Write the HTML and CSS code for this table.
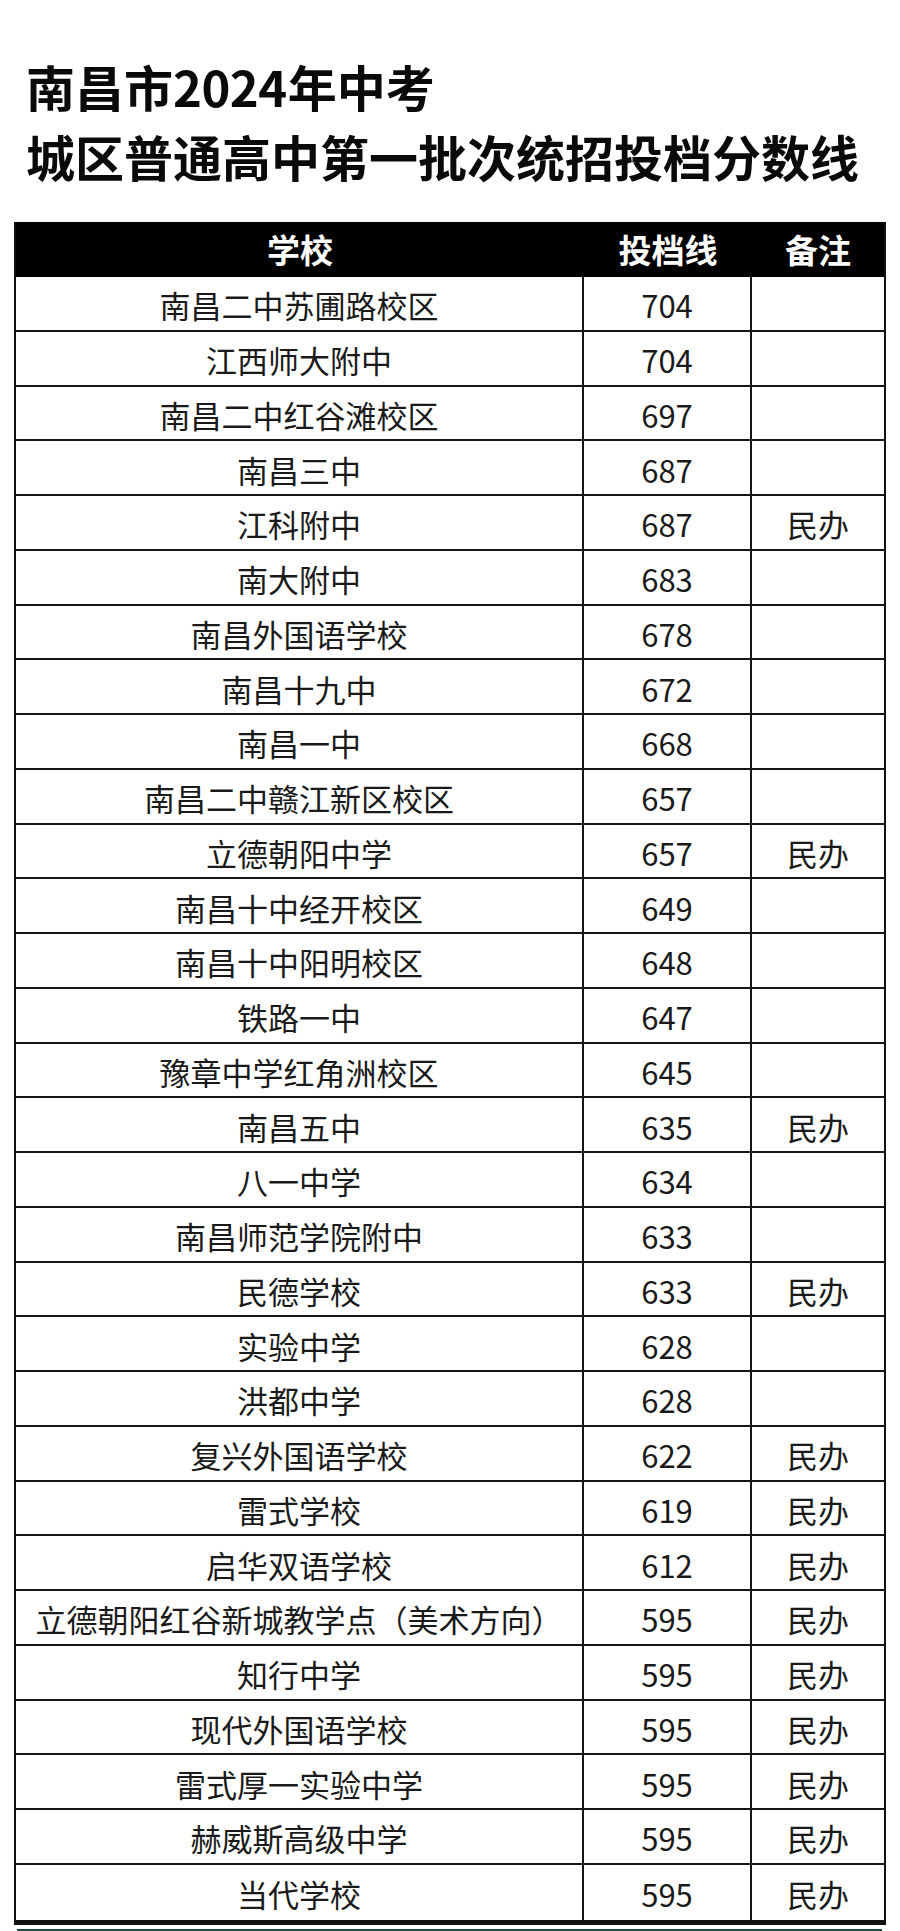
FILE: index.html
```html
<!DOCTYPE html>
<html lang="zh-CN">
<head>
<meta charset="utf-8">
<title>南昌市2024年中考城区普通高中第一批次统招投档分数线</title>
<link rel="stylesheet" href="styles.css">
</head>
<body>
<div class="page">
  <h1 class="title">
    <span class="line">南昌市<span class="num">2024</span>年中考</span>
    <span class="line">城区普通高中第一批次统招投档分数线</span>
  </h1>
  <div class="table">
    <div class="thead">
      <div class="cell c1">学校</div>
      <div class="cell c2">投档线</div>
      <div class="cell c3">备注</div>
    </div>
    <div class="row"><div class="cell c1">南昌二中苏圃路校区</div><div class="cell c2">704</div><div class="cell c3"></div></div>
    <div class="row"><div class="cell c1">江西师大附中</div><div class="cell c2">704</div><div class="cell c3"></div></div>
    <div class="row"><div class="cell c1">南昌二中红谷滩校区</div><div class="cell c2">697</div><div class="cell c3"></div></div>
    <div class="row"><div class="cell c1">南昌三中</div><div class="cell c2">687</div><div class="cell c3"></div></div>
    <div class="row"><div class="cell c1">江科附中</div><div class="cell c2">687</div><div class="cell c3">民办</div></div>
    <div class="row"><div class="cell c1">南大附中</div><div class="cell c2">683</div><div class="cell c3"></div></div>
    <div class="row"><div class="cell c1">南昌外国语学校</div><div class="cell c2">678</div><div class="cell c3"></div></div>
    <div class="row"><div class="cell c1">南昌十九中</div><div class="cell c2">672</div><div class="cell c3"></div></div>
    <div class="row"><div class="cell c1">南昌一中</div><div class="cell c2">668</div><div class="cell c3"></div></div>
    <div class="row"><div class="cell c1">南昌二中赣江新区校区</div><div class="cell c2">657</div><div class="cell c3"></div></div>
    <div class="row"><div class="cell c1">立德朝阳中学</div><div class="cell c2">657</div><div class="cell c3">民办</div></div>
    <div class="row"><div class="cell c1">南昌十中经开校区</div><div class="cell c2">649</div><div class="cell c3"></div></div>
    <div class="row"><div class="cell c1">南昌十中阳明校区</div><div class="cell c2">648</div><div class="cell c3"></div></div>
    <div class="row"><div class="cell c1">铁路一中</div><div class="cell c2">647</div><div class="cell c3"></div></div>
    <div class="row"><div class="cell c1">豫章中学红角洲校区</div><div class="cell c2">645</div><div class="cell c3"></div></div>
    <div class="row"><div class="cell c1">南昌五中</div><div class="cell c2">635</div><div class="cell c3">民办</div></div>
    <div class="row"><div class="cell c1">八一中学</div><div class="cell c2">634</div><div class="cell c3"></div></div>
    <div class="row"><div class="cell c1">南昌师范学院附中</div><div class="cell c2">633</div><div class="cell c3"></div></div>
    <div class="row"><div class="cell c1">民德学校</div><div class="cell c2">633</div><div class="cell c3">民办</div></div>
    <div class="row"><div class="cell c1">实验中学</div><div class="cell c2">628</div><div class="cell c3"></div></div>
    <div class="row"><div class="cell c1">洪都中学</div><div class="cell c2">628</div><div class="cell c3"></div></div>
    <div class="row"><div class="cell c1">复兴外国语学校</div><div class="cell c2">622</div><div class="cell c3">民办</div></div>
    <div class="row"><div class="cell c1">雷式学校</div><div class="cell c2">619</div><div class="cell c3">民办</div></div>
    <div class="row"><div class="cell c1">启华双语学校</div><div class="cell c2">612</div><div class="cell c3">民办</div></div>
    <div class="row"><div class="cell c1">立德朝阳红谷新城教学点（美术方向）</div><div class="cell c2">595</div><div class="cell c3">民办</div></div>
    <div class="row"><div class="cell c1">知行中学</div><div class="cell c2">595</div><div class="cell c3">民办</div></div>
    <div class="row"><div class="cell c1">现代外国语学校</div><div class="cell c2">595</div><div class="cell c3">民办</div></div>
    <div class="row"><div class="cell c1">雷式厚一实验中学</div><div class="cell c2">595</div><div class="cell c3">民办</div></div>
    <div class="row"><div class="cell c1">赫威斯高级中学</div><div class="cell c2">595</div><div class="cell c3">民办</div></div>
    <div class="row"><div class="cell c1">当代学校</div><div class="cell c2">595</div><div class="cell c3">民办</div></div>
  </div>
  <div class="footer-bar"></div>
</div>
</body>
</html>
```
FILE: styles.css
```css
html, body {
  margin: 0;
  padding: 0;
  background: #ffffff;
}

body {
  font-family: "Noto Sans CJK SC", "Noto Sans", sans-serif;
  color: #1a1a1a;
}

.page {
  width: 900px;
  overflow: hidden;
}

.title {
  margin: 0;
  padding: 51px 0 0 26px;
  font-size: 49px;
  line-height: 70px;
  font-weight: 700;
  color: #0a0a0a;
}

.title .line {
  display: block;
  white-space: nowrap;
}

.title .num {
  letter-spacing: -0.5px;
  margin-right: 1px;
}

.table {
  margin: 31px 0 0 14px;
  width: 872px;
  box-sizing: border-box;
  border-left: 2px solid #111;
  border-right: 2px solid #111;
  border-bottom: 5px solid #111;
}

.thead,
.row {
  display: grid;
  grid-template-columns: 568px 168px 1fr;
}

.thead {
  height: 55px;
  background: #000;
  color: #fff;
  font-size: 33px;
  font-weight: 700;
}

.thead .cell {
  line-height: 55px;
}

.row {
  height: 54.75px;
  box-sizing: border-box;
  border-bottom: 2px solid #151515;
  font-size: 31px;
  font-weight: 400;
}

.row:last-child {
  border-bottom: none;
}

.cell {
  display: flex;
  align-items: center;
  justify-content: center;
  white-space: nowrap;
  box-sizing: border-box;
}

.row .cell {
  padding-top: 3px;
}

.row .c1,
.row .c2 {
  border-right: 2px solid #151515;
}

.footer-bar {
  margin: 4px 0 0 17px;
  width: 865px;
  height: 12px;
  background: #1f4a42;
}
```
